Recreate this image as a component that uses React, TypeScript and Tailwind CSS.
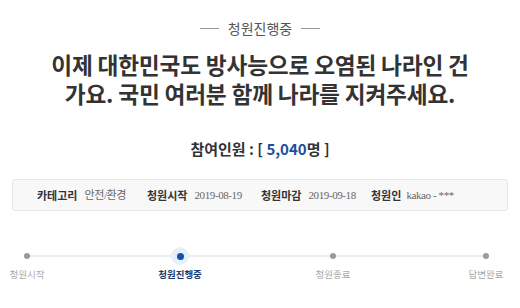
const steps = [
  { label: '청원시작', active: false },
  { label: '청원진행중', active: true },
  { label: '청원종료', active: false },
  { label: '답변완료', active: false },
];

const info = [
  { label: '카테고리', value: '안전/환경' },
  { label: '청원시작', value: '2019-08-19' },
  { label: '청원마감', value: '2019-09-18' },
  { label: '청원인', value: 'kakao - ***' },
];

export default function App() {
  return (
    <div
      className="w-[520px] h-[308px] bg-white overflow-hidden"
      style={{ fontFamily: '"Noto Sans CJK KR", "Noto Sans", sans-serif' }}
    >
      {/* status */}
      <div className="pt-[18px] flex items-center justify-center gap-[9px]">
        <span className="w-[19px] h-px bg-[#999]" />
        <span className="text-[14px] leading-[20px] text-[#555]">청원진행중</span>
        <span className="w-[19px] h-px bg-[#999]" />
      </div>

      {/* title */}
      <h1 className="mt-[12px] text-center text-[22.7px] leading-[29px] font-bold text-[#333] tracking-[-0.2px]">
        이제 대한민국도 방사능으로 오염된 나라인 건
        <br />
        가요. 국민 여러분 함께 나라를 지켜주세요.
      </h1>

      {/* count */}
      <div className="mt-[30px] text-center text-[15px] leading-[22px] font-bold text-[#333]">
        참여인원 : [ <span className="text-[#1b4f9c]">5,040</span>명 ]
      </div>

      {/* info box */}
      <div className="mt-[19px] mx-[12px] h-[32px] border border-[#e8e8e8] rounded-[3px] bg-[#f8f8f8] flex items-center pl-[24px] text-[11px] leading-[16px]">
        {info.map((it, i) => (
          <div
            key={it.label}
            className={
              i === 0 ? 'w-[110px] flex gap-[7px]' : i === 1 ? 'w-[114px] flex gap-[7px]' : i === 2 ? 'w-[110px] flex gap-[7px]' : 'flex gap-[5px]'
            }
          >
            <span className="font-bold text-[#333]">{it.label}</span>
            <span
              className="text-[#666] tracking-[-0.4px]"
              style={{ fontFamily: '"Liberation Serif", "Noto Sans CJK KR", serif' }}
            >
              {it.value}
            </span>
          </div>
        ))}
      </div>

      {/* timeline */}
      <div className="relative mt-[36px] ml-[27px] mr-[34px] h-[40px]">
        <div className="absolute left-0 right-0 top-[8px] h-[2px] bg-[#ececec]" />
        <div className="relative flex justify-between">
          {steps.map((s) => (
            <div key={s.label} className="relative w-0 flex flex-col items-center">
              <div className="h-[18px] flex items-center justify-center">
                {s.active ? (
                  <span className="w-[18px] h-[18px] rounded-full bg-[#e6f0fb] flex items-center justify-center">
                    <span className="w-[7px] h-[7px] rounded-full bg-[#1450a8]" />
                  </span>
                ) : (
                  <span className="w-[6px] h-[6px] rounded-full bg-[#9a9a9a]" />
                )}
              </div>
              <span
                className={
                  s.active
                    ? 'mt-[2px] whitespace-nowrap text-[9.5px] leading-[14px] font-bold text-[#1c3c6c]'
                    : 'mt-[2px] whitespace-nowrap text-[9.5px] leading-[14px] text-[#aaa]'
                }
              >
                {s.label}
              </span>
            </div>
          ))}
        </div>
      </div>
    </div>
  );
}
